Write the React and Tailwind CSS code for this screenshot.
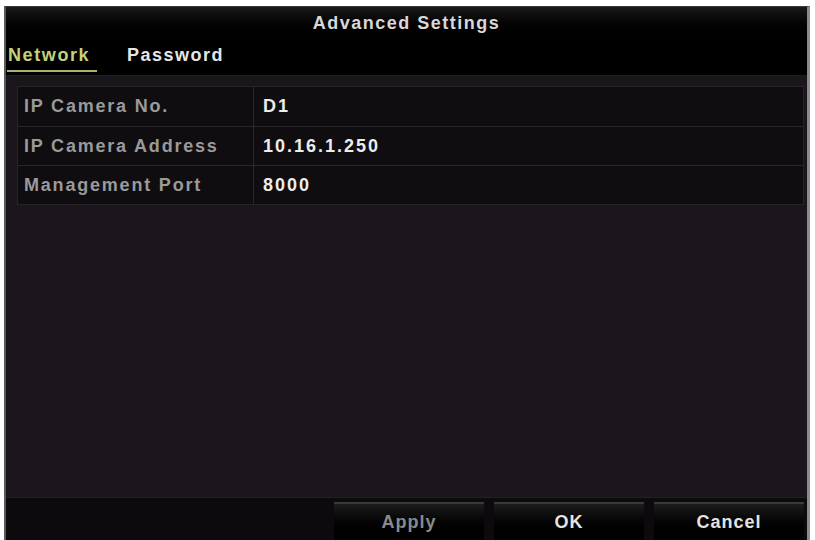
import React from 'react';

const rows = [
  { label: 'IP Camera No.', value: 'D1' },
  { label: 'IP Camera Address', value: '10.16.1.250' },
  { label: 'Management Port', value: '8000' },
];

const font = { fontFamily: '"Liberation Sans", Arial, sans-serif' };

export default function App() {
  return (
    <div className="w-[815px] h-[540px] bg-white pt-[6px] pl-[4px] pr-[5px] overflow-hidden" style={font}>
      <div className="h-full flex flex-col border-l-2 border-t border-r-[3px] border-l-[#5a5a5a] border-t-[#3a3a3a] border-r-[#8a8a8a] bg-black">
        {/* Title */}
        <div className="h-[33px] flex items-center justify-center bg-gradient-to-b from-[#1a1a1a] to-black">
          <span className="text-[18px] font-bold tracking-[1.5px] text-[#d8d8d8]">Advanced Settings</span>
        </div>

        {/* Tabs */}
        <div className="h-[36px] flex items-end gap-[30px] pl-[1px] border-b border-[#1e1b1f]">
          <div className="flex flex-col">
            <span className="text-[18px] font-bold tracking-[1.6px] text-[#c3d27a] leading-[30px] px-[1px]">Network</span>
            <div className="h-[2px] w-[90px] bg-[#a9b26e] mb-[3px]" />
          </div>
          <span className="text-[18px] font-bold tracking-[1.5px] text-[#e6e6e6] leading-[30px] mb-[5px]">Password</span>
        </div>

        {/* Content */}
        <div className="flex-1 bg-[#1a161b] pt-[10px] pl-[11px] pr-[3px] flex flex-col">
          <div className="border border-[#272328] bg-[#100d11]">
            {rows.map((r, i) => (
              <div key={r.label} className={`flex h-[39px] ${i > 0 ? 'border-t border-[#2a262b]' : ''}`}>
                <div className="w-[236px] flex items-center pl-[6px] border-r border-[#2a262b]">
                  <span className="text-[18px] font-bold tracking-[1.8px] text-[#9a9a9a]">{r.label}</span>
                </div>
                <div className="flex-1 flex items-center pl-[9px]">
                  <span className="text-[18px] font-bold tracking-[2px] text-[#ececec]">{r.value}</span>
                </div>
              </div>
            ))}
          </div>
        </div>

        {/* Footer */}
        <div className="h-[43px] bg-[#0d0a0e] border-t border-[#231f24] flex items-end pr-[3px]">
          <div className="flex-1" />
          <div className="flex gap-[10px]">
            {['Apply', 'OK', 'Cancel'].map((b) => (
              <div
                key={b}
                className="w-[150px] h-[38px] bg-gradient-to-b from-[#1c1c1c] to-black border-t-2 border-[#3a3a3a] flex items-center justify-center"
              >
                <span className={`text-[18px] font-bold tracking-[1px] ${b === 'Apply' ? 'text-[#8a8a8a]' : 'text-[#e4e4e4]'}`}>
                  {b}
                </span>
              </div>
            ))}
          </div>
        </div>
      </div>
    </div>
  );
}
